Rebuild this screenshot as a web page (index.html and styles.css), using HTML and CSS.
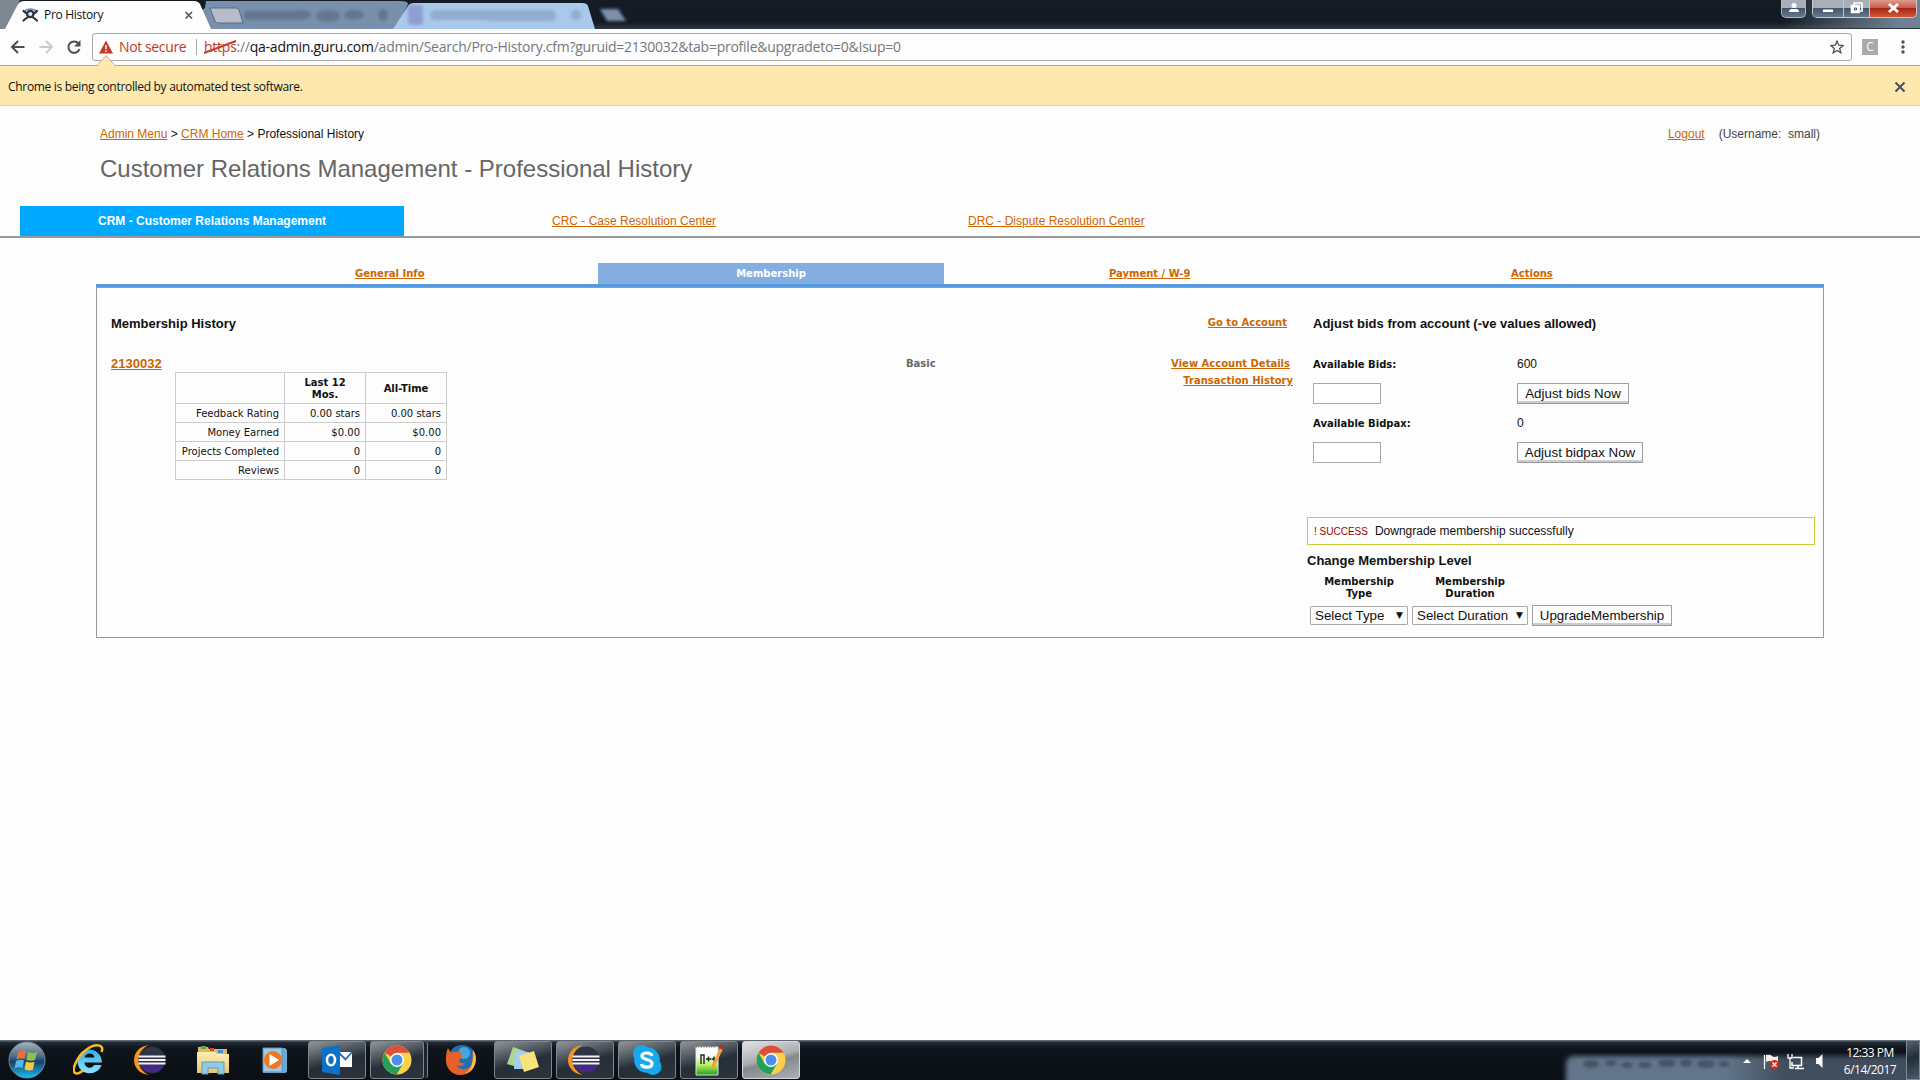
FILE: index.html
```html
<!DOCTYPE html>
<html lang="en">
<head>
<meta charset="utf-8">
<title>Pro History</title>
<link rel="stylesheet" href="styles.css">
</head>
<body>
<svg width="0" height="0" class="defs">
  <defs>
    <linearGradient id="orb" x1="0" y1="0" x2="0" y2="1"><stop offset="0" stop-color="#a9b4bd"/><stop offset=".4" stop-color="#4a6c86"/><stop offset=".55" stop-color="#153f66"/><stop offset="1" stop-color="#1cc0fa"/></linearGradient>
    <linearGradient id="ieg" x1="0" y1="0" x2="0" y2="1"><stop offset="0" stop-color="#39a9ea"/><stop offset="1" stop-color="#8be6ff"/></linearGradient>
    <linearGradient id="folder" x1="0" y1="0" x2="0" y2="1"><stop offset="0" stop-color="#fdf0b8"/><stop offset="1" stop-color="#e9c469"/></linearGradient>
    <linearGradient id="npg" x1="0" y1="0" x2="0" y2="1"><stop offset=".3" stop-color="#fff"/><stop offset=".65" stop-color="#b4ef5a"/><stop offset="1" stop-color="#1f9c1f"/></linearGradient>
    <symbol id="chrome" viewBox="0 0 30 30">
      <circle cx="15" cy="15" r="14.5" fill="#fbd04a"/>
      <path d="M15 15 2.5 7.7A14.5 14.5 0 0 1 27.6 7.8H15z" fill="#d9503f"/>
      <path d="M2.5 7.7A14.5 14.5 0 0 0 14.5 29.5L21.2 18.6 15 15 8.8 18.6z" fill="#23a05c"/>
      <circle cx="15" cy="15" r="7" fill="#fff"/><circle cx="15" cy="15" r="5.5" fill="#4d90e8"/>
    </symbol>
    <symbol id="eclipse" viewBox="0 0 32 30">
      <path d="M15 0C-5 2-5 28 15 30 1 24 1 6 15 0z" fill="#f7941e"/>
      <circle cx="18" cy="15" r="13.500" fill="#2f3347"/>
      <path d="M6 20h24a13.500 13.500 0 0 1-24 0z" fill="#44288a"/>
      <path d="M4.500 11.500h27M4.500 15h27M4.500 18.500h27" stroke="#f4f2fa" stroke-width="1.900"/>
    </symbol>
  </defs>
</svg>

<header class="tabstrip">
  <svg class="tabs" width="660" height="29" viewBox="0 0 660 29">
    <defs><filter id="smudge" x="-20%" y="-50%" width="140%" height="200%"><feGaussianBlur stdDeviation="1.500"/></filter></defs>
    <path d="M0 0H20L6 29H0z" fill="#7d8791"/>
    <path d="M172 29H396L408 4Q408 1 400 1H206L205 8z" fill="#7890ad"/>
    <g filter="url(#smudge)" fill="#637690">
      <rect x="244" y="11" width="60" height="9" rx="4"/><ellipse cx="300" cy="15" rx="11" ry="5"/><ellipse cx="328" cy="16" rx="12" ry="6"/><ellipse cx="354" cy="15" rx="10" ry="5"/><ellipse cx="383" cy="15" rx="5" ry="6"/>
    </g>
    <path d="M393 29 408 6Q410 3 414 3H582Q587 3 588 6L595 29z" fill="#a8c8ec"/>
    <g filter="url(#smudge)" fill="#91add0">
      <rect x="408" y="5" width="15" height="20" rx="4" fill="#8f9fd2"/><rect x="430" y="10" width="60" height="10" rx="5"/><rect x="484" y="10" width="72" height="11" rx="5"/><circle cx="576" cy="15" r="5"/>
      <path d="M600 9H618L626 21H607z" fill="#7b91a9"/>
    </g>
    <path d="M210 8H236Q238 8 239 10L243 23H219Q216 23 215 21z" fill="#b6bdca" stroke="#5e6b7d"/>
    <path d="M5 29 18 4Q20 1 24 1H194Q198 1 200 4L211 29z" fill="#fdfdfd"/>
    <g stroke="#2f343a" fill="none" stroke-width="2.200" stroke-linecap="round"><path d="M23.500 11q3 3 7 3t6.500-3M23.500 20.500l5-4M37 20.500l-5-4"/><circle cx="30.300" cy="14" r="3.200" fill="#dfe8f0"/></g>
    <path d="M25 10.500q5-3 11 0" fill="none" stroke="#4a90c8" stroke-width="1.500"/>
    <path d="M185.500 12l6.500 6.500M192 12l-6.500 6.500" stroke="#53575b" stroke-width="1.700"/>
  </svg>
  <span class="tab-title">Pro History</span>
  <div class="caption">
    <span class="cap user"><svg width="24" height="18"><circle cx="12" cy="5.500" r="2.500" fill="#fff"/><path d="M7 12q0-3 3-3h4q3 0 3 3z" fill="#fff"/></svg></span>
    <span class="cap-group">
      <span class="cap"><svg width="30" height="18"><path d="M10 9.500h10v2.500h-10z" fill="#fff"/></svg></span>
      <span class="cap mid"><svg width="25" height="18" fill="none" stroke="#fff" stroke-width="1.700"><path d="M10 5V3h8v8h-2"/><path d="M7.500 5.500h7.500v7H7.500z" fill="#fff"/><path d="M10.500 8h2v2h-2z" stroke="#46536b" stroke-width="1"/></svg></span>
      <span class="cap red"><svg width="46" height="18"><path d="M19 4l9 8M28 4l-9 8" stroke="#fff" stroke-width="3"/></svg></span>
    </span>
  </div>
</header>

<div class="toolbar">
  <svg class="nav" width="92" height="36" fill="none" stroke="#4b4f54" stroke-width="2">
    <path d="M24.500 18H12.500M18 12 12 18l6 6"/>
    <path d="M39.500 18H51.500M46 12l6 6-6 6" stroke="#c9cacc"/>
    <path d="M78.500 14.500A5.700 5.700 0 1 0 79.500 20"/><path d="M80.500 11v6.500H74z" fill="#4b4f54" stroke="none"/>
  </svg>
  <div class="omnibox">
    <svg width="14" height="14" viewBox="0 0 14 14"><path d="M7 .5 14 13.500H0z" fill="#c53929"/><path d="M7 5v4M7 10.200v1.600" stroke="#fff" stroke-width="1.500"/></svg>
    <span class="insecure">Not secure</span><i class="sep"></i>
    <span class="url"><span class="scheme">https<svg width="34" height="16"><path d="M0 14 32 2" stroke="#c53929" stroke-width="2"/></svg></span>://<b>qa-admin.guru.com</b>/admin/Search/Pro-History.cfm?guruid=2130032&amp;tab=profile&amp;upgradeto=0&amp;Isup=0</span>
    <svg class="star" width="14" height="14" viewBox="0 0 14 14"><path d="M7 1l1.700 4.200 4.500.3-3.500 2.900 1.100 4.400L7 10.400l-3.800 2.400 1.100-4.400L.8 5.500l4.500-.3z" fill="none" stroke="#4b4f5c" stroke-width="1.300"/></svg>
  </div>
  <span class="ext">C</span>
  <svg class="dots" width="6" height="16" fill="#4b4f5c"><circle cx="3" cy="3" r="1.700"/><circle cx="3" cy="8" r="1.700"/><circle cx="3" cy="13" r="1.700"/></svg>
</div>

<div class="infobar">
  <svg class="notch" width="18" height="11"><path d="M0 11 9 .5 18 11z" fill="#fee8ae"/><path d="M0 10.500 9 .7 18 10.500" fill="none" stroke="#bcb49b"/></svg>
  <span>Chrome is being controlled by automated test software.</span>
  <svg width="12" height="12"><path d="M1.500 1.500l9 9M10.500 1.500l-9 9" stroke="#4b4f5c" stroke-width="2"/></svg>
</div>

<main>
  <div class="crumbs">
    <div class="path"><a>Admin Menu</a> &gt; <a>CRM Home</a> &gt; Professional History</div>
    <div class="who"><a>Logout</a><span>(Username:&nbsp; small)</span></div>
  </div>
  <h1>Customer Relations Management - Professional History</h1>
  <nav class="primary">
    <span class="on">CRM - Customer Relations Management</span>
    <span class="crc"><a>CRC - Case Resolution Center</a></span>
    <span class="drc"><a>DRC - Dispute Resolution Center</a></span>
  </nav>
  <nav class="secondary">
    <span class="t1"><a>General Info</a></span>
    <span class="t2">Membership</span>
    <span class="t3"><a>Payment / W-9</a></span>
    <span class="t4"><a>Actions</a></span>
  </nav>
  <section class="panel">
    <div class="history">
      <h2>Membership History</h2>
      <a class="guru">2130032</a>
      <table>
        <colgroup><col class="c1"><col class="c2"><col class="c2"></colgroup>
        <tr><th></th><th>Last 12<br>Mos.</th><th>All-Time</th></tr>
        <tr><td>Feedback Rating</td><td>0.00 stars</td><td>0.00 stars</td></tr>
        <tr><td>Money Earned</td><td>$0.00</td><td>$0.00</td></tr>
        <tr><td>Projects Completed</td><td>0</td><td>0</td></tr>
        <tr><td>Reviews</td><td>0</td><td>0</td></tr>
      </table>
    </div>
    <div class="plan">Basic</div>
    <div class="links">
      <a class="l1">Go to Account</a>
      <a class="l2">View Account Details</a>
      <a class="l3">Transaction History</a>
    </div>
    <div class="adjust">
      <h2>Adjust bids from account (-ve values allowed)</h2>
      <div class="grid">
        <label>Available Bids:</label><span>600</span>
        <input type="text"><div><button class="b1">Adjust bids Now</button></div>
        <label>Available Bidpax:</label><span>0</span>
        <input type="text"><div><button class="b2">Adjust bidpax Now</button></div>
      </div>
      <div class="alert"><em>! SUCCESS</em>Downgrade membership successfully</div>
      <h3>Change Membership Level</h3>
      <div class="level">
        <div class="field f1"><strong>Membership<br>Type</strong><div class="select">Select Type<i>▼</i></div></div>
        <div class="field f2"><strong>Membership<br>Duration</strong><div class="select">Select Duration<i>▼</i></div></div>
        <button class="b3">UpgradeMembership</button>
      </div>
    </div>
  </section>
</main>

<footer class="taskbar">
  <span class="item start"><svg width="40" height="38" viewBox="0 0 40 38"><circle cx="20" cy="19" r="18" fill="url(#orb)" stroke="#71889a"/><path d="M11 11q4-3 8-1l-1.500 8q-4-1.500-8 .5z" fill="#e8703a"/><path d="M21 11q5 2 9 0l-2 8q-4 1.500-8.500 0z" fill="#8cc152"/><path d="M9 20q4-2 8-.5L15.500 27q-4-1.500-8 .5z" fill="#58b4ea"/><path d="M19 20.500q4 2 8.500.3L26 28.500q-4 2-8.500-.3z" fill="#fbc93d"/></svg></span>
  <span class="item"><svg width="32" height="32" viewBox="0 0 32 32"><path d="M29 18.500H11.500c.5 6 7.500 7 9.500 2.500h7.500C25 33 4 32 4.500 16.500 5 2 28 1 29 18.500zM11.500 13.500h10c-.5-5.500-9-5.500-10 0z" fill="url(#ieg)" fill-rule="evenodd"/><path d="M28.500 8C32 0 22-1 13 6 4 13-2 26 2 29c2 1.500 6-1 8-2.500" fill="none" stroke="#f5bd22" stroke-width="2.500"/></svg></span>
  <span class="item ecl"><svg width="32" height="30"><use href="#eclipse"/></svg></span>
  <span class="item"><svg width="34" height="32" viewBox="0 0 34 32"><path d="M2 3h10l1 2h18v24H2z" fill="#e2b75c"/><path d="M5 2h5v3H5z" fill="#41b549"/><path d="M14 4h4v3h-4z" fill="#d8482d"/><path d="M22 6h5v3h-5z" fill="#3b92d2"/><path d="M1 8h18l2 2h12v19H1z" fill="url(#folder)"/><path d="M6 30V18h22v12h-6v-6H12v6z" fill="#8fcbe6" stroke="#5e9dbb"/></svg></span>
  <span class="item"><svg width="28" height="28" viewBox="0 0 28 28"><path d="M2 2h22l2 2v22l-2 1H2z" fill="#6ba9cf"/><path d="M2 2h19v24H2z" fill="#9ccbe5" stroke="#5b93b8"/><circle cx="12" cy="14" r="9" fill="#ef7622"/><path d="M8.500 8v12l9.500-6z" fill="#fff"/></svg></span>
  <span class="item open"><svg width="32" height="32" viewBox="0 0 32 32"><path d="M18 8h13v15H18z" fill="#fff"/><path d="M18 9l6.500 6.500L31 8" fill="none" stroke="#1673c5" stroke-width="1.800"/><path d="M1 4 19 1v30L1 28z" fill="#0a72c8"/><ellipse cx="10" cy="16" rx="4" ry="5.200" fill="none" stroke="#fff" stroke-width="2.600"/></svg></span>
  <span class="item open stack"><svg width="30" height="30"><use href="#chrome"/></svg></span>
  <span class="item fox"><svg width="32" height="32" viewBox="0 0 32 32"><circle cx="17" cy="15" r="14" fill="#1e6fae"/><circle cx="19" cy="9" r="6" fill="#43a9dc"/><path d="M28 6c6 9 2 24-12 25C5 31 0 22 1 14 1 9 2 6 3 4l3 5q3-2 6-1l4-2c-1 3-1 5 2 6l-4 4q1 4 6 3c-2 5-8 3-9 2 4 7 15 5 16-3 1-5 0-9 1-12z" fill="#e5602a"/><path d="M28 6c6 9 2 21-8 24 7-5 9-13 8-24z" fill="#f9c243"/></svg></span>
  <span class="item open"><svg width="34" height="30" viewBox="0 0 34 30"><path d="M7 2l14 5-7 16L1 19z" fill="#a9d98e"/><path d="M9 7h14v17H8z" fill="#a6cdf0"/><path d="M13 11l15-5 5 16-15 5z" fill="#fae27a"/></svg></span>
  <span class="item open ecl"><svg width="32" height="30"><use href="#eclipse"/></svg></span>
  <span class="item open"><svg width="30" height="32" viewBox="0 0 30 32"><circle cx="9.500" cy="9.500" r="8.500" fill="#16a9ee"/><circle cx="21" cy="22.500" r="8.500" fill="#16a9ee"/><circle cx="15" cy="16" r="12.800" fill="#16a9ee"/><path d="M20 12c-1-4-10-4-10 0 0 4.500 10 2.500 10 7.500 0 5-10 4.500-10.500.5" fill="none" stroke="#fff" stroke-width="3.200"/></svg></span>
  <span class="item open"><svg width="32" height="32" viewBox="0 0 32 32"><path d="M3 3h22v28H3z" fill="url(#npg)" stroke="#d7e5d7"/><path d="M3 2.500h20" stroke="#777" stroke-dasharray="1 1.500" stroke-width="2"/><path d="M8 20v-9h3v9M13 15h5M15.500 12.500v5M18.500 15h5M21 12.500v5" fill="none" stroke="#222" stroke-width="1.400"/><path d="M29 3 19 25" stroke="#eca53a" stroke-width="3.200"/><path d="M30 1l-2 4" stroke="#a63232" stroke-width="4"/></svg></span>
  <span class="item open active"><svg width="30" height="30"><use href="#chrome"/></svg></span>
  <div class="tray">
    <svg class="blurred" width="360" height="27"><defs><filter id="sm2"><feGaussianBlur stdDeviation="2.500"/></filter><linearGradient id="trayg"><stop offset=".4" stop-color="#62758a"/><stop offset=".55" stop-color="#3f4d5d"/></linearGradient></defs><rect x="6" y="3" width="400" height="40" rx="8" fill="url(#trayg)" filter="url(#sm2)"/><g fill="#435469" filter="url(#smudge)"><ellipse cx="31" cy="11" rx="8" ry="4"/><ellipse cx="51" cy="10" rx="6" ry="3"/><ellipse cx="67" cy="12" rx="6" ry="3"/><ellipse cx="85" cy="12" rx="7" ry="3"/><ellipse cx="107" cy="10" rx="9" ry="4"/><ellipse cx="126" cy="10" rx="6" ry="4"/><ellipse cx="146" cy="11" rx="9" ry="4"/><ellipse cx="164" cy="11" rx="6" ry="3"/></g></svg>
    <svg class="tray-icons" width="90" height="20" viewBox="0 0 90 20"><path d="M3 12 7 8l4 4z" fill="#fff"/><path d="M24.500 4v14" stroke="#fff" stroke-width="1.300"/><path d="M26 4q4-1 6 1t6 0v7q-4 1-6-1t-6 0z" fill="#eee"/><circle cx="34.500" cy="13.500" r="4.500" fill="#d92b1c"/><path d="M32.500 11.500l4 4M36.500 11.500l-4 4" stroke="#fff" stroke-width="1.300"/><path d="M53 6.500h8.500v8H52V11M55 17.500h9M58 14v3" fill="none" stroke="#fff" stroke-width="1.500"/><path d="M48 3v4h4V3M50 7v10h4" fill="none" stroke="#fff" stroke-width="1.300"/><path d="M76 7h2.500l4-4v14l-4-4H76z" fill="#fff"/></svg>
    <div class="clock"><span>12:33 PM</span><span>6/14/2017</span></div>
    <i class="peek"></i>
  </div>
</footer>
</body>
</html>
```
FILE: styles.css
```css
* { box-sizing: border-box; }
html, body { margin: 0; height: 100%; overflow: hidden; }
body { display: flex; flex-direction: column; width: 1920px; height: 1080px; background: #fdfdfd; color: #111; font: 12px/16px "Liberation Sans", Arial, sans-serif; }
svg { display: block; flex: none; }
.defs { position: absolute; }
a { color: #cc6600; text-decoration: underline; }
h1, h2, h3 { margin: 0; }

/* window frame */
.tabstrip { position: relative; display: flex; justify-content: space-between; flex: none; height: 29px; background: linear-gradient(90deg, transparent 1780px, #6f8192 1900px), linear-gradient(#141b25, #131a23 80%, #2a3440); border-bottom: 1px solid #2c3540; }
.tab-title { position: absolute; left: 44px; top: 7px; font: 12px/16px "Open Sans", sans-serif; letter-spacing: -.3px; }
.caption { display: flex; margin-right: 3px; gap: 6px; height: 18px; }
.cap-group { display: flex; border: 1px solid #c5c8cc; border-top: 0; border-radius: 0 0 5px 5px; overflow: hidden; }
.cap { background: linear-gradient(#a9afb9 45%, #46556a 50%, #66788c); }
.cap.user { width: 25px; border: 1px solid #b4b8bd; border-top: 0; border-radius: 0 0 5px 5px; }
.cap.mid { border: solid #c5c8cc; border-width: 0 1px; }
.cap.red { background: linear-gradient(#dc9a8d, #c75d4d 45%, #ab2413 50%, #cf5b34); }

.toolbar { display: flex; align-items: center; flex: none; height: 36px; background: #fdfdfd; }
.omnibox { display: flex; align-items: center; width: 1760px; height: 28px; padding: 0 7px 0 6px; border: 1px solid #a9a9a9; border-radius: 3px; font: 14px/20px "Open Sans", sans-serif; }
.insecure { margin-left: 6px; color: #c53929; width: 67px; white-space: nowrap; letter-spacing: -.38px; }
.sep { width: 1px; height: 16px; margin: 0 7px 0 10px; background: #aaa; }
.url { color: #75787b; white-space: nowrap; letter-spacing: -.25px; }
.url b { font-weight: 400; color: #111; }
.scheme { position: relative; color: #c53929; }
.scheme svg { position: absolute; left: 0; top: 2px; }
.star { margin-left: auto; }
.ext { width: 16px; height: 16px; margin-left: 10px; background: #aaa; color: #fff; font: 12px/16px "Open Sans", sans-serif; text-align: center; }
.dots { margin-left: 22px; }

.infobar { position: relative; display: flex; align-items: center; justify-content: space-between; flex: none; height: 41px; padding: 2px 14px 0 8px; background: #fee8ae; border-top: 1px solid #a9a9a9; border-bottom: 1px solid #cfcfcf; font: 12px/16px "Open Sans", sans-serif; letter-spacing: -.31px; }
.notch { position: absolute; left: 97px; top: -11px; }

/* page */
main { flex: 1; padding-top: 20px; }
.crumbs { display: flex; justify-content: space-between; padding: 0 100px; }
.who { display: flex; gap: 14px; color: #444; }
h1 { margin: 11px 0 0 100px; font-size: 24px; line-height: 32px; font-weight: 400; color: #666; }
.primary { display: flex; margin-top: 21px; height: 32px; padding-left: 20px; border-bottom: 2px solid #999; line-height: 30px; }
.primary .on { width: 384px; background: #00a8ff; color: #fff; font-weight: 700; text-align: center; }
.crc { margin-left: 148px; width: 416px; }
.secondary { display: flex; width: 1728px; margin: 25px 0 0 96px; border-bottom: 3px solid #5599e0; height: 24px; font: 700 10px/21px "DejaVu Sans", Verdana, sans-serif; }
.t1 { width: 502px; padding-left: 259px; }
.t2 { width: 346px; background: #85aee0; color: #fff; text-align: center; }
.t3 { width: 567px; padding-left: 165px; }
.panel { display: flex; width: 1728px; height: 351px; margin-left: 96px; border: 1px solid #999; }
h2, h3 { font-size: 13px; line-height: 16px; }
.history { width: 809px; padding: 28px 0 0 14px; }
.guru { display: block; margin-top: 24px; font-size: 13px; line-height: 16px; font-weight: 700; }
table { width: 272px; margin-left: 64px; border-collapse: collapse; table-layout: fixed; font: 10px/12px "DejaVu Sans", Verdana, sans-serif; }
.c1 { width: 109px; }
.c2 { width: 81px; }
th, td { border: 1px solid #ccc; padding: 1px 5px 0; height: 19px; text-align: right; white-space: nowrap; }
th { height: 31px; text-align: center; }
.plan { width: 200px; padding-top: 68px; color: #666; font: 700 10px/16px "DejaVu Sans", Verdana, sans-serif; }
.links { display: flex; flex-direction: column; align-items: flex-end; width: 187px; padding-top: 27px; font: 700 10px/16px "DejaVu Sans", Verdana, sans-serif; }
.l1 { margin: 0 6px 25px 0; }
.l2 { margin: 0 3px 1px 0; }
.adjust { flex: 1; padding: 28px 0 0 14px; }
.adjust h2 { margin-left: 6px; }
.grid { display: grid; grid-template-columns: 204px 1fr; grid-template-rows: 16px 21px 16px 21px; margin: 24px 0 0 6px; row-gap: 11px; }
.grid label { font: 700 10px/17px "DejaVu Sans", Verdana, sans-serif; }
.grid input { width: 68px; height: 21px; padding: 0; border: 1px solid #a9a9a9; background: #fff; }
button { display: block; height: 21px; padding: 0; border: 1px solid #a0a0a0; border-bottom-color: #999; border-radius: 1px; box-shadow: inset 0 -2px #ccc; background: #fdfdfd; font: 13.333px/18px "Liberation Sans", Arial, sans-serif; color: #111; }
.b1 { width: 112px; }
.b2 { width: 126px; }
.b3 { width: 140px; margin-top: 29px; }
.alert { width: 508px; height: 28px; margin-top: 54px; padding-left: 6px; border: 1px solid #cccc33; line-height: 26px; }
.alert em { margin-right: 7px; font-style: normal; font-size: 10px; color: #990000; }
h3 { margin: 8px 0 0; }
.level { display: flex; margin: 7px 0 0 3px; }
.field { margin-right: 4px; }
.field strong { display: block; text-align: center; font: 700 10px/12px "DejaVu Sans", Verdana, sans-serif; }
.select { display: flex; justify-content: space-between; height: 19px; margin-top: 6px; padding: 0 4px; border: 1px solid #a9a9a9; border-radius: 1px; font-size: 13.333px; line-height: 17px; white-space: nowrap; }
.select i { font: 9px/16px "DejaVu Sans", sans-serif; }
.f1 { width: 98px; }
.f2 { width: 116px; }

/* taskbar */
.taskbar { position: relative; display: flex; flex: none; height: 40px; background: linear-gradient(#5d6873 0 1px, #242c36 2px, #10151c 8px, #0a0f16); }
.item { display: flex; align-items: center; justify-content: center; width: 58px; height: 38px; margin: 1px 2px 0 2px; }
.start { width: 54px; margin: 1px 4px 0 0; }
.start + .item { margin-left: 2px; }
.ecl { padding-right: 3px; }
.open { border: 1px solid #7e858b; border-radius: 3px; background: linear-gradient(165deg, #929698, #4c545c 35%, #262e37 55%, #2c353f); }
.stack { width: 54px; margin-right: 6px; padding-right: 1px; box-shadow: 4px 0 0 -1px #1b232c, 5px 0 0 -1px #7e858b; }
.active { border-color: #d5d8da; background: linear-gradient(165deg, #e2e3e4, #aaadb0 45%, #85898d 55%, #adb0b3); }
.tray { position: relative; display: flex; flex: none; margin-left: auto; height: 40px; }
.blurred { position: absolute; right: 0; bottom: 0; }
.tray-icons { position: relative; margin: 11px 10px 0 0; }
.clock { position: relative; display: flex; flex-direction: column; align-items: center; width: 60px; padding-top: 4px; margin-right: 6px; color: #fff; font: 12px/17px "Open Sans", sans-serif; letter-spacing: -.5px; white-space: nowrap; }
.peek { position: relative; width: 14px; border: 1px solid #7d8c9a; background: linear-gradient(160deg, #55616e, #232d38 45%, #4b5b6b); }
```
